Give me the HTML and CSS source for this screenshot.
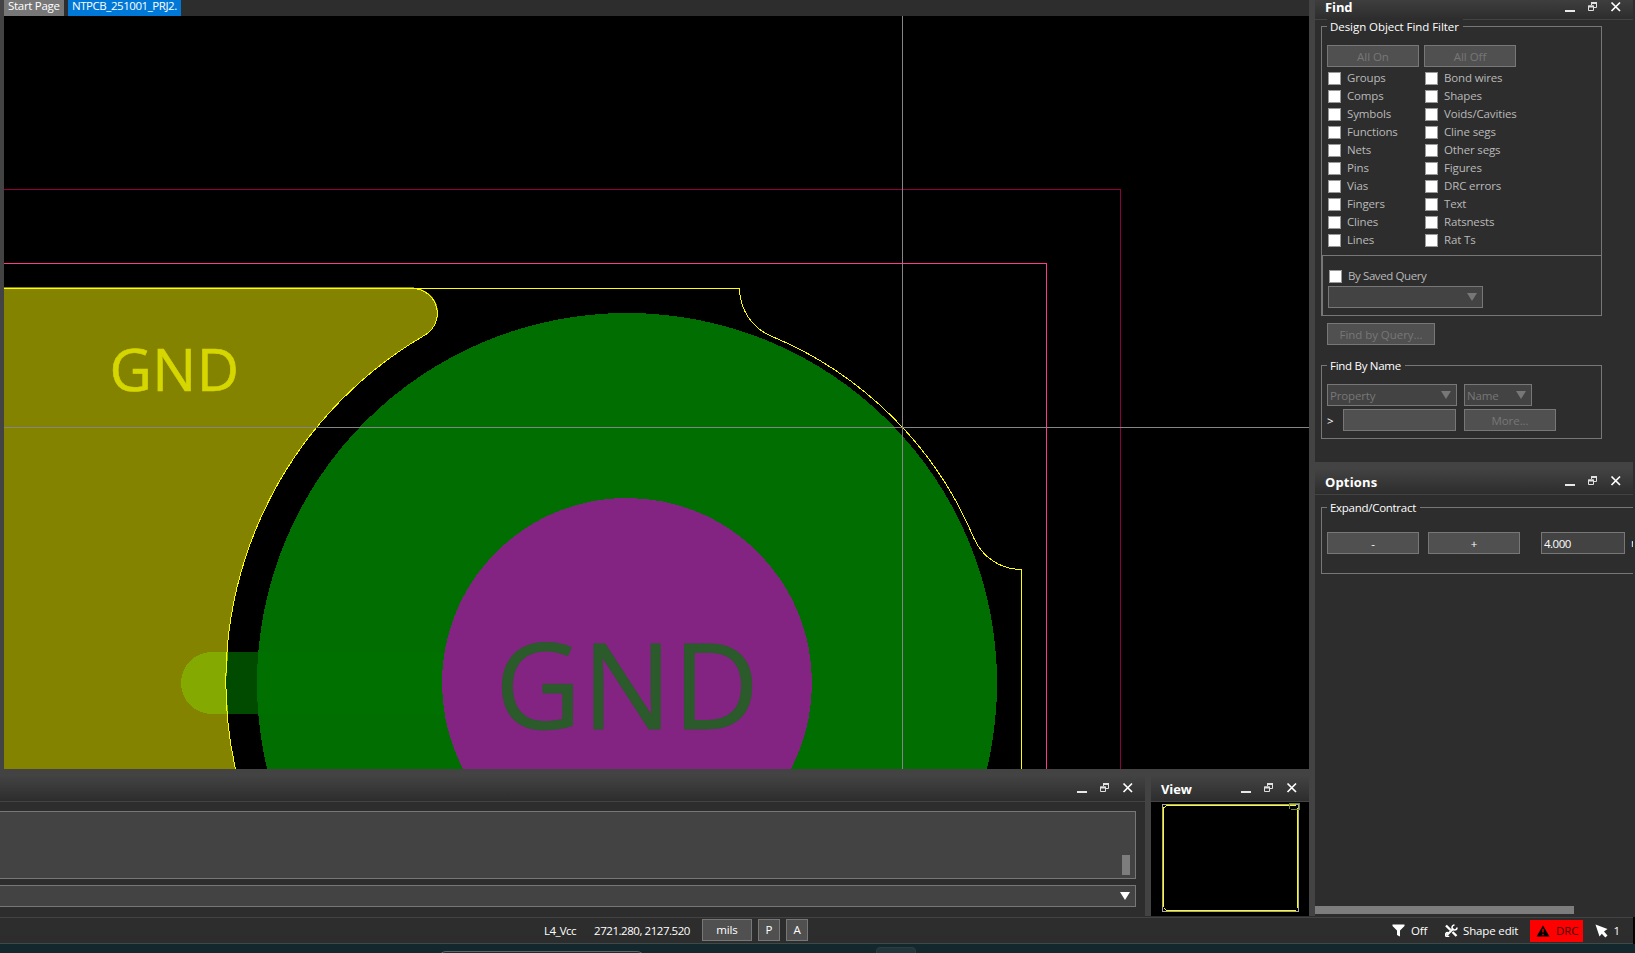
FILE: index.html
```html
<!DOCTYPE html>
<html lang="en">
<head>
<meta charset="utf-8">
<title>PCB Editor</title>
<link rel="stylesheet" href="styles.css">
</head>
<body>
<svg width="0" height="0" class="defs">
  <symbol id="win" viewBox="0 0 58 12">
    <rect x="0" y="9" width="10" height="2" fill="#e8e8e8"/>
    <path d="M26.500 4V1.500H31.500V6.500H28M23.500 5H28.500V9.500H23.500Z" fill="none" stroke="#e0e0e0"/>
    <path d="M26 2H32M23 5.500H29" stroke="#e0e0e0" stroke-width="2"/>
    <path d="M46.500 1.500L55 10M55 1.500L46.500 10" stroke="#fff" stroke-width="1.700"/>
  </symbol>
</svg>
<div class="app">
  <div class="work">
    <div class="left">
      <div class="tabs"><span class="tab">Start Page</span><span class="tab active">NTPCB_251001_PRJ2.</span></div>
      <svg class="board" viewBox="4 16 1305 753" shape-rendering="crispEdges">
        <rect x="4" y="16" width="1305" height="753" fill="#000"/>
        <path d="M4 287H415L413 288A25 25 0 0 1 425.500 334.700A401 401 0 0 0 235.500 769H4Z" fill="#838300"/>
        <path d="M181 683A31 31 0 0 1 212 652H235Q217 683 235 714H212A31 31 0 0 1 181 683Z" fill="#84a900"/>
        <path d="M228.500 652H300V714H228.500Q224 683 228.500 652Z" fill="#004b00"/>
        <circle cx="627" cy="683" r="370" fill="#006e00"/>
        <path d="M259 652H640V714H259Z" fill="#007000"/>
        <circle cx="627" cy="683" r="185" fill="#832382"/>
        <path d="M4 288.500H739.500M413 288.500A25 25 0 0 1 425.500 334.700A401 401 0 0 0 235.500 769" class="line yellow"/>
        <path d="M739.500 288.500A52 52 0 0 0 771 336A375.600 375.600 0 0 1 973.700 537.800A52 52 0 0 0 1021.500 569.500V769" class="line yellow"/>
        <path d="M4 263.500H1046.500V769" class="line pink"/>
        <path d="M4 189.500H1120.500V769" class="line wine"/>
        <text x="109.500" y="390.500" class="net small" textLength="129.500">GND</text>
        <text x="495" y="729" class="net big" textLength="264">GND</text>
        <path d="M4 427.500H1309M902.500 16V769" class="line cross"/>
      </svg>
      <div class="lower">
        <div class="command">
          <div class="head"><svg class="win" viewBox="0 0 58 12"><use href="#win"/></svg></div>
          <div class="log"><i></i></div>
          <div class="entry"><b class="arrow white"></b></div>
        </div>
        <div class="view">
          <div class="head"><h2>View</h2><svg class="win" viewBox="0 0 58 12"><use href="#win"/></svg></div>
          <svg class="mini" viewBox="1151 802 158 114" shape-rendering="crispEdges">
            <rect x="1162.500" y="804.500" width="136" height="107" fill="none" stroke="#a9a9a9"/>
            <path d="M1166 805.500H1296M1297.500 808V908M1296 910.500H1166M1163.500 907V807M1164 807.500h1M1165 806.500h1M1164 908.500h1M1165 909.500h1" stroke="#ff0" fill="none"/>
            <path d="M1289.500 809V803.500H1299.500V809.500H1291" stroke="#6d8738" fill="none"/>
          </svg>
        </div>
      </div>
    </div>
    <div class="right">
      <div class="panel find">
        <div class="head"><h2>Find</h2><svg class="win" viewBox="0 0 58 12"><use href="#win"/></svg></div>
        <div class="group filter"><span class="legend">Design Object Find Filter</span>
          <div class="row pair"><span class="btn off">All On</span><span class="btn off">All Off</span></div>
          <div class="checks">
            <label><i></i>Groups</label><label><i></i>Bond wires</label>
            <label><i></i>Comps</label><label><i></i>Shapes</label>
            <label><i></i>Symbols</label><label><i></i>Voids/Cavities</label>
            <label><i></i>Functions</label><label><i></i>Cline segs</label>
            <label><i></i>Nets</label><label><i></i>Other segs</label>
            <label><i></i>Pins</label><label><i></i>Figures</label>
            <label><i></i>Vias</label><label><i></i>DRC errors</label>
            <label><i></i>Fingers</label><label><i></i>Text</label>
            <label><i></i>Clines</label><label><i></i>Ratsnests</label>
            <label><i></i>Lines</label><label><i></i>Rat Ts</label>
          </div>
        </div>
        <div class="saved"><label><i></i>By Saved Query</label><div class="combo wide"><b class="arrow"></b></div></div>
        <div class="btn off query">Find by Query...</div>
        <div class="group name"><span class="legend">Find By Name</span>
          <div class="row combos"><div class="combo prop">Property<b class="arrow"></b></div><div class="combo nm">Name<b class="arrow"></b></div></div>
          <div class="row more"><span class="gt">&gt;</span><span class="field dim"></span><span class="btn off">More...</span></div>
        </div>
      </div>
      <div class="panel options">
        <div class="head"><h2>Options</h2><svg class="win" viewBox="0 0 58 12"><use href="#win"/></svg></div>
        <div class="group expand"><span class="legend">Expand/Contract</span>
          <div class="row"><span class="btn">-</span><span class="btn plus">+</span><span class="field value">4.000</span><span class="unit">mils</span></div>
        </div>
        <div class="scroll"></div>
      </div>
    </div>
  </div>
  <div class="status">
    <span class="layer">L4_Vcc</span><span class="coords">2721.280, 2127.520</span>
    <span class="btn mils">mils</span><span class="btn sq">P</span><span class="btn sq">A</span>
    <div class="modes">
      <svg width="13" height="13" viewBox="0 0 13 13"><path d="M.5.500H12.500V2L8 6.500V12.500L5 11V6.500L.5 2Z" fill="#fff"/></svg>
      <span class="offtxt">Off</span>
      <svg width="13" height="13" viewBox="0 0 13 13" fill="none" stroke="#fff"><path d="M1 1.500L5.500 6M7.500 8L11.500 12" stroke-width="2.400"/><path d="M1.500 11.500L8.500 4.500" stroke-width="2"/><path d="M12 3.500A2.500 2.500 0 1 1 9.500 1M3.500 9A2 2 0 1 0 4 12" stroke-width="1.500"/></svg>
      <span class="shape">Shape edit</span>
      <span class="drc"><svg width="14" height="12" viewBox="0 0 14 12"><path d="M7 .5L13.500 11.500H.5Z" fill="#000"/><path d="M7 4V7.500M7 8.700V10.200" stroke="#f00" stroke-width="1.300"/></svg>DRC</span>
      <svg width="13" height="14" viewBox="0 0 13 14"><path d="M.5.500L12.500 5L9 7.500L12.500 11.500L10.300 13.500L6.800 9.700L4.500 12.500Z" fill="#fff"/></svg>
      <span class="count">1</span>
    </div>
  </div>
  <div class="taskbar"><i class="search"></i><i class="task"></i></div>
</div>
</body>
</html>
```
FILE: styles.css
```css
* { box-sizing: border-box; }
body { margin: 0; background: #000; overflow: hidden; font: 11.5px/16px "Open Sans", "Noto Sans", sans-serif; color: #fff; letter-spacing: -.15px; }
.defs { display: block; height: 0; }
.app { width: 1635px; height: 953px; overflow: hidden; display: flex; flex-direction: column; white-space: nowrap; }
.work { display: flex; height: 917px; flex: none; background: #2d2d2d; }
.left { width: 1315px; display: flex; flex-direction: column; border-right: 6px solid #434343; height: 916px; }
.tabs { display: flex; gap: 4px; height: 16px; flex: none; border-left: 4px solid #434343; background: #2d2d2d; line-height: 11px; }
.tab { width: 60px; padding-left: 4px; background: #777; letter-spacing: -.3px; }
.active { width: 113px; background: #0078d7; padding-left: 4px; letter-spacing: -.45px; }
.board { display: block; width: 1309px; height: 753px; flex: none; border-left: 4px solid #434343; }
.line { fill: none; stroke-width: 1; }
.yellow { stroke: #ff0; }
.pink { stroke: #ff3a8c; }
.wine { stroke: #90003f; }
.cross { stroke: #858585; }
.net { font-family: "Open Sans", sans-serif; letter-spacing: 0; }
.small { font-size: 58.4px; fill: #d6d600; stroke: #d6d600; stroke-width: .6; }
.big { font-size: 119px; fill: #2b5a2b; stroke: #2b5a2b; stroke-width: .8; }
.lower { display: flex; height: 147px; flex: none; }
.command { width: 1151px; border-right: 6px solid #434343; }
.view { width: 158px; }
.head { display: flex; height: 33px; justify-content: space-between; align-items: center; padding: 6px 10px 0 10px; border-bottom: 1px solid #434343; background: linear-gradient(#434343 20%, #2d2d2d); }
.command .head { justify-content: flex-end; padding-right: 10px; }
h2 { margin: 0; font: bold 13px/16px "Open Sans", "Noto Sans", sans-serif; letter-spacing: -.1px; }
.view h2, .options h2 { padding-top: 2px; }
.options h2 { letter-spacing: .15px; }
.win { width: 58px; height: 12px; }
.log { height: 68px; margin: 9px 9px 0 0; border: 1px solid #777; border-left: 0; background: #434343; display: flex; justify-content: flex-end; padding: 43px 5px 0 0; }
.log i { width: 8px; height: 20px; background: #7d7d7d; }
.entry { height: 22px; margin: 6px 9px 0 0; border: 1px solid #777; border-left: 0; background: #434343; display: flex; justify-content: flex-end; align-items: center; padding-right: 5px; }
.arrow { border: 5.5px solid transparent; border-top: 8px solid #777; border-bottom: 0; }
.arrow.white { border-top-color: #fff; }
.mini { display: block; width: 158px; height: 114px; background: #000; }
.right { width: 318px; overflow: hidden; }
.find { height: 462px; }
.find .head { height: 20px; padding: 0 10px 5px 10px; background: linear-gradient(#3e3e3e, #2d2d2d); }
.group { border: 1px solid #777; display: flex; flex-direction: column; margin-left: 6px; width: 281px; }
.legend { line-height: 18px; height: 16px; align-self: flex-start; margin: -9px 0 0 0; padding: 0 4px 0 3px; background: #2d2d2d; flex: none; }
.row { display: flex; align-items: center; }
.btn { flex: none; width: 92px; height: 22px; line-height: 22px; text-align: center; border: 1px solid #777; background: #505050; }
.off { color: #777; letter-spacing: -.05px; }
.filter { height: 230px; margin-top: 6px; padding-left: 5px; border-bottom: 0; margin-bottom: -1px; }
.filter .legend { letter-spacing: -.06px; }
.pair { gap: 5px; margin-top: 11px; }
.checks { display: grid; grid-template-columns: 97px 1fr; grid-auto-rows: 18px; margin: 2px 0 0 1px; }
label { display: flex; align-items: center; gap: 6px; color: #b9b9b9; height: 18px; line-height: 16px; }
label i { width: 13px; height: 13px; background: #fff; border: 1px solid #999; }
.saved { width: 281px; height: 61px; margin-left: 6px; border: 1px solid #777; border-left-width: 2px; padding: 11px 0 0 5px; }
.saved label { padding-left: 1px; margin-bottom: 1px; letter-spacing: -.4px; }
.combo { height: 22px; line-height: 23px; border: 1px solid #777; background: #434343; color: #777; padding: 0 5px 0 2px; display: flex; justify-content: space-between; align-items: center; letter-spacing: -.15px; }
.wide { width: 155px; justify-content: flex-end; }
.query { width: 108px; margin: 7px 0 20px 12px; }
.name { height: 74px; padding-left: 5px; }
.name .legend, .expand .legend { letter-spacing: -.28px; }
.combos { margin-top: 11px; gap: 7px; }
.prop { width: 130px; }
.nm { width: 68px; }
.more { margin-top: 3px; }
.gt { width: 16px; padding-top: 1px; }
.field { width: 113px; height: 22px; line-height: 21px; border: 1px solid #777; background: #434343; flex: none; }
.dim { background: #505050; margin-right: 8px; }
.options { height: 455px; }
.expand { width: 330px; height: 67px; margin-top: 12px; padding-left: 5px; }
.expand .row { margin-top: 17px; }
.plus { margin-left: 9px; }
.value { width: 84px; margin: 0 6px 0 21px; padding-left: 2px; letter-spacing: -.5px; }
.scroll { width: 259px; height: 8px; margin-top: 332px; background: #7d7d7d; }
.status { height: 27px; width: 1633px; flex: none; display: flex; align-items: center; background: #2d2d2d; border-top: 1px solid #434343; border-bottom: 1px solid #3d4a4b; padding-left: 544px; }
.status .btn { line-height: 20px; margin-top: -1px; }
.layer { width: 50px; letter-spacing: -.6px; }
.coords { width: 108px; letter-spacing: -.45px; }
.mils { width: 50px; margin-right: 6px; }
.sq { width: 22px; margin-right: 6px; }
.modes { display: flex; align-items: center; margin-left: auto; height: 22px; padding-right: 13px; }
.offtxt { width: 34px; margin-left: 6px; }
.shape { width: 67px; margin-left: 5px; }
.drc { width: 53px; height: 22px; display: flex; align-items: center; gap: 6px; padding-left: 6px; margin-right: 12px; background: #f00; color: #400; }
.count { width: 8px; text-align: right; margin-left: 4px; }
.taskbar { position: relative; height: 9px; flex: none; background: #13282d; }
.search { position: absolute; left: 438px; top: 7px; width: 207px; height: 20px; border: 1px solid #58666a; border-radius: 8px; background: #1c2b30; }
.task { position: absolute; left: 876px; top: 3px; width: 40px; height: 20px; border-radius: 4px; background: #223539; border: 1px solid #2b3d41; }
```
